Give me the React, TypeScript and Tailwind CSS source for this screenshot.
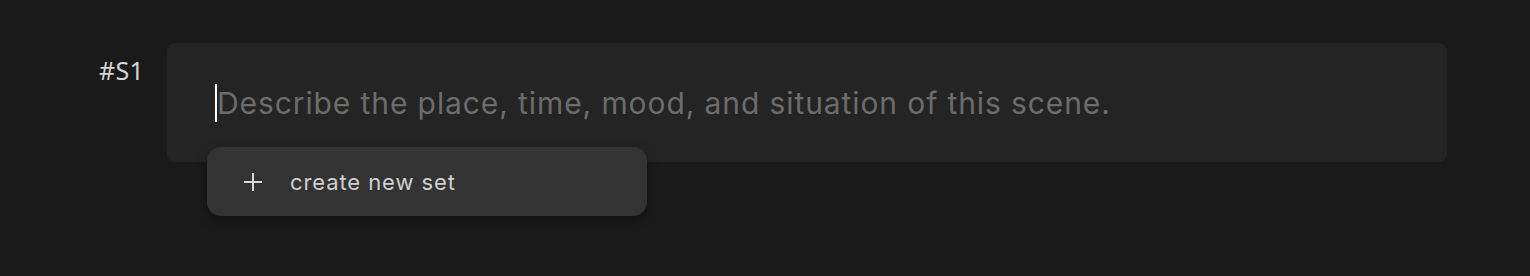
import React from "react";

export default function App() {
  return (
    <div className="w-[1530px] h-[276px] bg-[#1a1a1a] overflow-hidden" style={{ fontFamily: "Inter, sans-serif" }}>
      <div className="flex pt-[43px] pl-[99px]">
        <div className="w-[68px] pt-[12px] text-[25px] leading-[30px] tracking-[0.3px] text-[#d4d4d4]" style={{ fontFamily: "'Noto Sans', sans-serif" }}>
          #S1
        </div>
        <div className="relative">
          <div className="w-[1280px] h-[119px] bg-[#242424] rounded-[8px] pl-[48px] pt-[41px]">
            <div className="flex items-center h-[38px]">
              <span className="w-[2px] h-[38px] bg-white" />
              <span className="text-[30px] leading-[38px] tracking-[0.9px] text-[#6c6c6c]">
                Describe the place, time, mood, and situation of this scene.
              </span>
            </div>
          </div>
          <div className="absolute left-[40px] top-[104px] w-[440px] h-[69px] bg-[#333333] rounded-[14px] shadow-[0_4px_12px_rgba(0,0,0,0.35)] flex items-center pl-[36px]">
            <svg width="20" height="20" viewBox="0 0 20 20" className="text-[#d8d8d8]">
              <path d="M10 1v18M1 10h18" stroke="currentColor" strokeWidth="2" />
            </svg>
            <span className="ml-[27px] text-[22px] leading-[28px] tracking-[0.9px] text-[#cfcfcf]">create new set</span>
          </div>
        </div>
      </div>
    </div>
  );
}
